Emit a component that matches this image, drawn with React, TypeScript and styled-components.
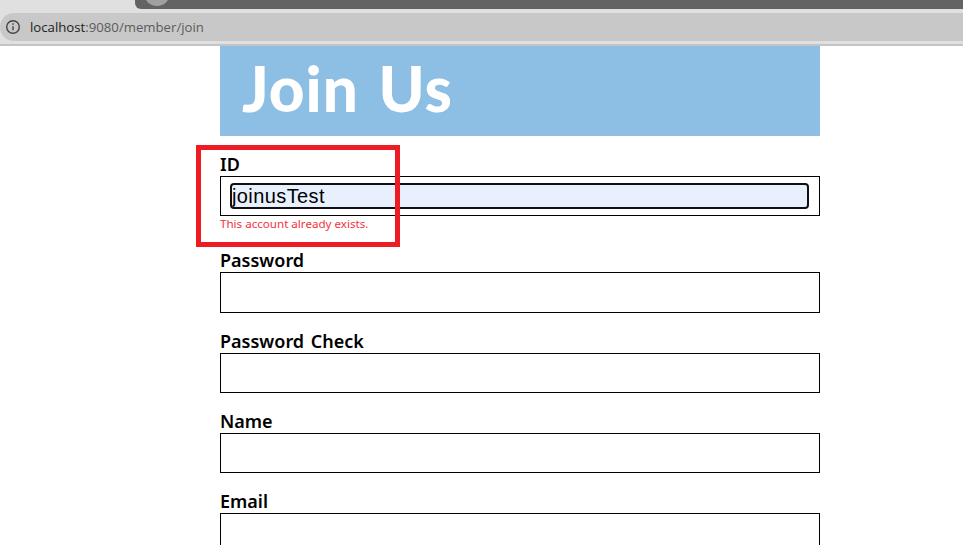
import styled, {createGlobalStyle} from 'styled-components';

const GlobalStyle = createGlobalStyle`
  html, body {
    margin: 0;
    padding: 0;
    height: 545px;
    overflow: hidden;
    background: #fff;
    font-family: "Noto Sans", "Liberation Sans", sans-serif;
  }
`;

const Page = styled.div`
  position: relative;
  width: 963px;
  height: 545px;
  overflow: hidden;
`;

const Chrome = styled.div`
  height: 46px;
  box-sizing: border-box;
  background: #e0e0e0;
  border-bottom: 2px solid #c4c4c4;
  overflow: hidden;
`;

const TabStrip = styled.div`
  height: 9px;
  margin-left: 135px;
  padding-left: 9px;
  background: #636363;
  border-bottom-left-radius: 6px;
  overflow: hidden;
`;

const TabDot = styled.div`
  width: 26px;
  height: 26px;
  margin-top: -20px;
  border-radius: 50%;
  background: #a0a0a0;
`;

const AddressBar = styled.div`
  display: flex;
  align-items: center;
  gap: 8px;
  height: 28px;
  margin-top: 4px;
  padding-left: 6px;
  background: #c8c8c8;
  border-radius: 14px 0 0 14px;
`;

const Url = styled.span`
  font-family: "Open Sans", "Noto Sans", sans-serif;
  font-size: 13.2px;
  color: #5c5c5c;
`;

const Host = styled.span`
  color: #222;
`;

const Content = styled.main`
  width: 600px;
  margin-left: 220px;
`;

const Banner = styled.header`
  height: 90px;
  padding-left: 22px;
  background: #8dbee3;
  color: #fff;
  font-family: Lato, "Noto Sans", sans-serif;
  font-size: 62px;
  font-weight: 900;
  line-height: 85px;
  letter-spacing: 1px;
  word-spacing: 4px;
`;

const Form = styled.form`
  display: flex;
  flex-direction: column;
  padding-top: 17px;
`;

const Field = styled.div<{$height: number}>`
  display: flex;
  flex-direction: column;
  height: ${({$height}) => $height}px;
`;

const Label = styled.label`
  height: 23px;
  font-size: 18px;
  font-weight: 600;
  line-height: 23px;
  word-spacing: 2px;
  color: #000;
`;

const InputBox = styled.div<{$height?: number}>`
  display: flex;
  align-items: center;
  box-sizing: border-box;
  height: ${({$height}) => $height ?? 40}px;
  padding: 0 10px 0 9px;
  border: 1px solid #000;
`;

const Input = styled.input`
  flex: 1;
  min-width: 0;
  box-sizing: border-box;
  height: 26px;
  padding: 0;
  border: 2px solid #101010;
  border-radius: 4px;
  outline: none;
  background: #e8f0fe;
  font-family: "Liberation Sans", Arial, sans-serif;
  font-size: 20px;
  letter-spacing: 0.4px;
  color: #000;
`;

const Error = styled.div`
  font-size: 11.6px;
  line-height: 16px;
  color: #f2323c;
`;

const Highlight = styled.div`
  position: absolute;
  left: 196px;
  top: 145px;
  box-sizing: border-box;
  width: 204px;
  height: 102px;
  border: 5px solid #ed1c24;
  pointer-events: none;
`;

const InfoIcon = () => (
	<svg width="16" height="16" viewBox="0 0 16 16" fill="none" stroke="#444" strokeWidth="1.4">
		<circle cx="7" cy="8" r="6.3" />
		<path d="M7 7.2v4" />
		<path d="M7 4.2v1.6" />
	</svg>
);

const fields = [
	{label: 'Password', height: 81, boxHeight: 41},
	{label: 'Password Check', height: 80},
	{label: 'Name', height: 80},
	{label: 'Email', height: 80},
];

export default function App() {
	return (
		<Page>
			<GlobalStyle />
			<Chrome>
				<TabStrip>
					<TabDot />
				</TabStrip>
				<AddressBar>
					<InfoIcon />
					<Url><Host>localhost</Host>:9080/member/join</Url>
				</AddressBar>
			</Chrome>
			<Content>
				<Banner>Join Us</Banner>
				<Form>
					<Field $height={96}>
						<Label>ID</Label>
						<InputBox>
							<Input readOnly defaultValue="joinusTest" />
						</InputBox>
						<Error>This account already exists.</Error>
					</Field>
					{fields.map(({label, height, boxHeight}) => (
						<Field key={label} $height={height}>
							<Label>{label}</Label>
							<InputBox $height={boxHeight} />
						</Field>
					))}
				</Form>
			</Content>
			<Highlight />
		</Page>
	);
}
